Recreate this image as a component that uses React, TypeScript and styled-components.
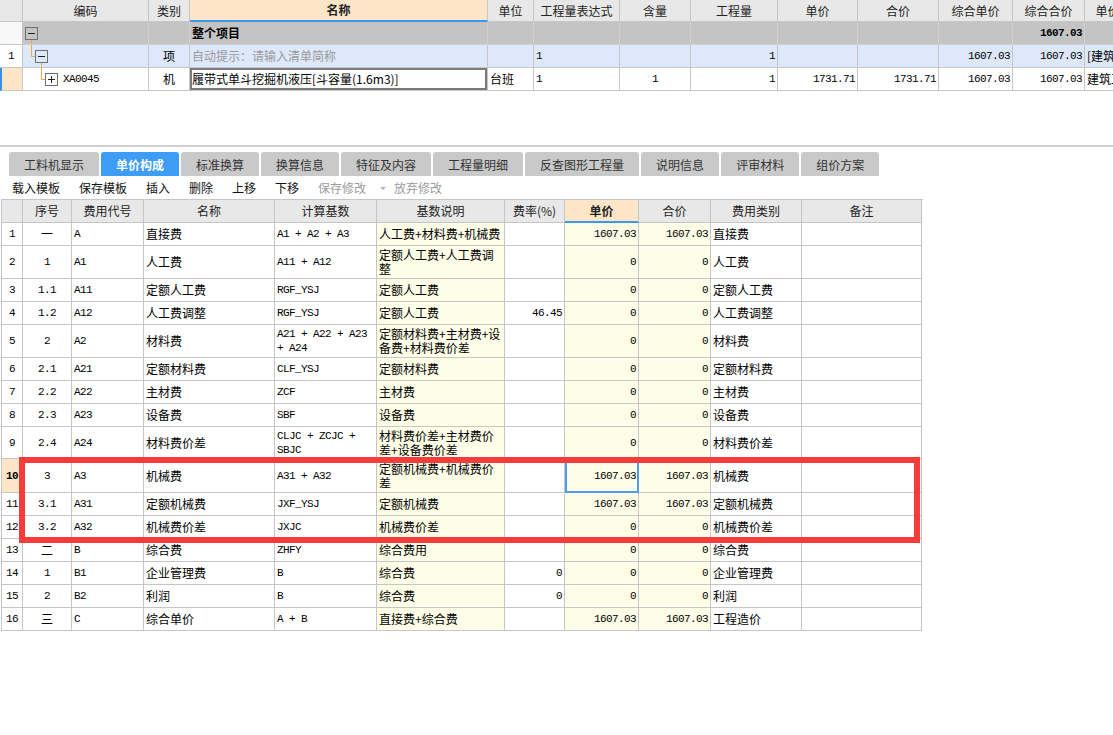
import React from 'react';
import styled, { createGlobalStyle } from 'styled-components';

const MONO = `"Liberation Mono", "DejaVu Sans Mono", monospace`;

const GlobalStyle = createGlobalStyle`
  html, body { margin: 0; padding: 0; background: #fff; overflow: hidden; }
  body {
    font-family: "Noto Sans CJK SC", "Noto Sans", sans-serif;
    font-size: 12px;
    color: #000;
    width: 1113px;
    height: 735px;
  }
  * { box-sizing: border-box; }
`;

type Align = 'left' | 'center' | 'right';

interface CellProps {
  $align?: Align;
  $bg?: string;
  $bold?: boolean;
  $mono?: boolean;
  $muted?: boolean;
  $selected?: boolean;
  $accent?: boolean;
  $edit?: boolean;
  $indent?: number;
  $lineColor?: string;
}

const Cell = styled.div<CellProps>`
  position: relative;
  display: flex;
  align-items: center;
  justify-content: ${(p) => (p.$align === 'right' ? 'flex-end' : p.$align === 'center' ? 'center' : 'flex-start')};
  text-align: ${(p) => p.$align ?? 'left'};
  padding: 0 2px 0 ${(p) => (p.$indent ?? 2)}px;
  border-right: 1px solid ${(p) => p.$lineColor ?? '#c6c6c6'};
  border-bottom: ${(p) => (p.$accent ? '2px solid #3d97f0' : `1px solid ${p.$lineColor ?? '#c6c6c6'}`)};
  background: ${(p) => p.$bg ?? 'transparent'};
  font-weight: ${(p) => (p.$bold ? 700 : 400)};
  color: ${(p) => (p.$muted ? '#9a9a9a' : '#000')};
  font-family: ${(p) => (p.$mono ? MONO : 'inherit')};
  font-size: ${(p) => (p.$mono ? '11px' : '12px')};
  letter-spacing: ${(p) => (p.$mono ? '-0.6px' : '0')};
  white-space: pre;
  line-height: 14px;
  overflow: hidden;
  min-width: 0;
  outline: ${(p) => (p.$selected ? '2px solid #4a9df0' : 'none')};
  outline-offset: -2px;
  box-shadow: ${(p) => (p.$edit ? 'inset 0 0 0 2px #7a7a7a' : 'none')};
`;

const HeadCell = styled(Cell)`
  color: #222;
`;

/* ---------- top table ---------- */

const TopWrap = styled.div`
  width: 1113px;
  overflow: hidden;
`;

const TopRow = styled.div<{ $h: number; $bg?: string }>`
  display: grid;
  grid-template-columns: 23px 126px 41px 298px 46px 86px 71px 87px 80px 81px 74px 72px 46px;
  width: 1131px;
  height: ${(p) => p.$h}px;
  background: ${(p) => p.$bg ?? '#fff'};
`;

const Indicator = styled(Cell)<{ $bar?: boolean }>`
  border-left: ${(p) => (p.$bar ? '2px solid #3a8ee6' : '0')};
`;

const ExpandBox = styled.span`
  position: relative;
  z-index: 1;
  flex: none;
  width: 13px;
  height: 13px;
  border: 1px solid #6f6f6f;
  display: inline-flex;
  align-items: center;
  justify-content: center;
`;

const CodeText = styled.span`
  margin-left: 5px;
  font-family: ${MONO};
  font-size: 11px;
  letter-spacing: -0.6px;
`;

const TreeSvg = styled.svg`
  position: absolute;
  left: 0;
  top: 0;
  width: 40px;
  height: 24px;
  overflow: visible;
  pointer-events: none;
`;

type Seg = [number, number, number, number];

const TreeLines: React.FC<{ segs: Seg[] }> = ({ segs }) => (
  <TreeSvg viewBox="0 0 40 24">
    {segs.map(([x1, y1, x2, y2], i) => (
      <line key={i} x1={x1} y1={y1} x2={x2} y2={y2} stroke="#f0a848" strokeWidth={1} />
    ))}
  </TreeSvg>
);

const Toggle: React.FC<{ plus?: boolean }> = ({ plus }) => (
  <ExpandBox>
    <svg width="11" height="11" viewBox="0 0 11 11">
      <line x1="2" y1="5.5" x2="9" y2="5.5" stroke="#222" strokeWidth={1} />
      {plus && <line x1="5.5" y1="2" x2="5.5" y2="9" stroke="#222" strokeWidth={1} />}
    </svg>
  </ExpandBox>
);

const topHeaders = ['', '编码', '类别', '名称', '单位', '工程量表达式', '含量', '工程量', '单价', '合价', '综合单价', '综合合价', '单价'];

/* ---------- tabs and toolbar ---------- */

const TabArea = styled.div`
  margin-top: 54px;
  border-top: 2px solid #d0d0d0;
  padding-top: 5px;
`;

const TabBar = styled.div`
  display: flex;
  gap: 2px;
  padding-left: 9px;
`;

const Tab = styled.div<{ $active?: boolean }>`
  height: 24px;
  padding: 0 15px;
  display: flex;
  align-items: center;
  background: ${(p) => (p.$active ? '#3d9cf4' : '#c9c9c9')};
  color: ${(p) => (p.$active ? '#fff' : '#333')};
  font-weight: ${(p) => (p.$active ? 700 : 400)};
  border-radius: 3px 3px 0 0;
`;

const Toolbar = styled.div`
  height: 23px;
  display: flex;
  align-items: center;
  gap: 19px;
  padding-left: 12px;
`;

const ToolItem = styled.span<{ $disabled?: boolean }>`
  color: ${(p) => (p.$disabled ? '#9c9c9c' : '#111')};
`;

const DropArrow = styled.span`
  width: 0;
  height: 0;
  margin: 1px -11px 0 -5px;
  border-left: 3px solid transparent;
  border-right: 3px solid transparent;
  border-top: 3px solid #b4b4b4;
`;

const tabs = ['工料机显示', '单价构成', '标准换算', '换算信息', '特征及内容', '工程量明细', '反查图形工程量', '说明信息', '评审材料', '组价方案'];
const tools: [string, boolean][] = [
  ['载入模板', false],
  ['保存模板', false],
  ['插入', false],
  ['删除', false],
  ['上移', false],
  ['下移', false],
  ['保存修改', true],
];

/* ---------- bottom table ---------- */

const BottomTable = styled.div`
  position: relative;
  margin-left: 1px;
  width: 922px;
  border-left: 1px solid #c6c6c6;
  border-top: 1px solid #c6c6c6;
`;

const BRow = styled.div<{ $h: number }>`
  display: grid;
  grid-template-columns: 21px 49px 72px 131px 102px 128px 60px 74px 72px 91px 120px;
  height: ${(p) => p.$h}px;
`;

const Highlight = styled.div`
  position: absolute;
  left: 17px;
  top: 257px;
  width: 901px;
  height: 86px;
  border: 6px solid #f63b3b;
  pointer-events: none;
`;

const YELLOW = '#fefee8';
const PEACH = '#fde6c8';
const HEAD = '#e8e8e8';

const bottomHeaders = ['', '序号', '费用代号', '名称', '计算基数', '基数说明', '费率(%)', '单价', '合价', '费用类别', '备注'];

interface FeeRow {
  seq: string;
  code: string;
  name: string;
  base: string;
  desc: string;
  rate: string;
  price: string;
  total: string;
  type: string;
  h: number;
}

const feeRows: FeeRow[] = [
  { seq: '一', code: 'A', name: '直接费', base: 'A1 + A2 + A3', desc: '人工费+材料费+机械费', rate: '', price: '1607.03', total: '1607.03', type: '直接费', h: 23 },
  { seq: '1', code: 'A1', name: '人工费', base: 'A11 + A12', desc: '定额人工费+人工费调\n整', rate: '', price: '0', total: '0', type: '人工费', h: 33 },
  { seq: '1.1', code: 'A11', name: '定额人工费', base: 'RGF_YSJ', desc: '定额人工费', rate: '', price: '0', total: '0', type: '定额人工费', h: 23 },
  { seq: '1.2', code: 'A12', name: '人工费调整', base: 'RGF_YSJ', desc: '定额人工费', rate: '46.45', price: '0', total: '0', type: '人工费调整', h: 23 },
  { seq: '2', code: 'A2', name: '材料费', base: 'A21 + A22 + A23\n+ A24', desc: '定额材料费+主材费+设\n备费+材料费价差', rate: '', price: '0', total: '0', type: '材料费', h: 33 },
  { seq: '2.1', code: 'A21', name: '定额材料费', base: 'CLF_YSJ', desc: '定额材料费', rate: '', price: '0', total: '0', type: '定额材料费', h: 23 },
  { seq: '2.2', code: 'A22', name: '主材费', base: 'ZCF', desc: '主材费', rate: '', price: '0', total: '0', type: '主材费', h: 23 },
  { seq: '2.3', code: 'A23', name: '设备费', base: 'SBF', desc: '设备费', rate: '', price: '0', total: '0', type: '设备费', h: 23 },
  { seq: '2.4', code: 'A24', name: '材料费价差', base: 'CLJC + ZCJC +\nSBJC', desc: '材料费价差+主材费价\n差+设备费价差', rate: '', price: '0', total: '0', type: '材料费价差', h: 32 },
  { seq: '3', code: 'A3', name: '机械费', base: 'A31 + A32', desc: '定额机械费+机械费价\n差', rate: '', price: '1607.03', total: '1607.03', type: '机械费', h: 34 },
  { seq: '3.1', code: 'A31', name: '定额机械费', base: 'JXF_YSJ', desc: '定额机械费', rate: '', price: '1607.03', total: '1607.03', type: '定额机械费', h: 23 },
  { seq: '3.2', code: 'A32', name: '机械费价差', base: 'JXJC', desc: '机械费价差', rate: '', price: '0', total: '0', type: '机械费价差', h: 23 },
  { seq: '二', code: 'B', name: '综合费', base: 'ZHFY', desc: '综合费用', rate: '', price: '0', total: '0', type: '综合费', h: 23 },
  { seq: '1', code: 'B1', name: '企业管理费', base: 'B', desc: '综合费', rate: '0', price: '0', total: '0', type: '企业管理费', h: 23 },
  { seq: '2', code: 'B2', name: '利润', base: 'B', desc: '综合费', rate: '0', price: '0', total: '0', type: '利润', h: 23 },
  { seq: '三', code: 'C', name: '综合单价', base: 'A + B', desc: '直接费+综合费', rate: '', price: '1607.03', total: '1607.03', type: '工程造价', h: 23 },
];

const isAscii = (s: string) => /^[\x20-\x7e]*$/.test(s);

const Page = styled.div`
  width: 1113px;
  height: 735px;
  overflow: hidden;
  background: #fff;
`;

export default function App() {
  const grayLine = '#d0d0d0';
  return (
    <Page>
      <GlobalStyle />
      <TopWrap>
        <TopRow $h={22} $bg={HEAD}>
          {topHeaders.map((h, i) =>
            i === 3 ? (
              <HeadCell key={i} $align="center" $bg={PEACH} $bold $accent>
                {h}
              </HeadCell>
            ) : (
              <HeadCell key={i} $align="center">
                {h}
              </HeadCell>
            )
          )}
        </TopRow>

        <TopRow $h={23} $bg="#c4c4c4">
          <Indicator $bg="#f8f8f8" $lineColor="#c6c6c6" />
          <Cell $indent={2} $lineColor={grayLine}>
            <TreeLines segs={[[8.5, 17.5, 8.5, 24]]} />
            <Toggle />
          </Cell>
          <Cell $lineColor={grayLine} />
          <Cell $bold $lineColor={grayLine}>整个项目</Cell>
          <Cell $lineColor={grayLine} />
          <Cell $lineColor={grayLine} />
          <Cell $lineColor={grayLine} />
          <Cell $lineColor={grayLine} />
          <Cell $lineColor={grayLine} />
          <Cell $lineColor={grayLine} />
          <Cell $lineColor={grayLine} />
          <Cell $align="right" $mono $bold $lineColor={grayLine}>1607.03</Cell>
          <Cell $lineColor={grayLine} />
        </TopRow>

        <TopRow $h={23} $bg="#dde8fa">
          <Indicator $align="center" $mono $bg="#fff">1</Indicator>
          <Cell $indent={12}>
            <TreeLines
              segs={[
                [8.5, -1, 8.5, 11.5],
                [8.5, 11.5, 12, 11.5],
                [18.5, 17.5, 18.5, 24],
              ]}
            />
            <Toggle />
          </Cell>
          <Cell $align="center">项</Cell>
          <Cell $muted>自动提示：请输入清单简称</Cell>
          <Cell />
          <Cell $mono>1</Cell>
          <Cell />
          <Cell $align="right" $mono>1</Cell>
          <Cell />
          <Cell />
          <Cell $align="right" $mono>1607.03</Cell>
          <Cell $align="right" $mono>1607.03</Cell>
          <Cell>[建筑工程]</Cell>
        </TopRow>

        <TopRow $h={23}>
          <Indicator $bg={PEACH} $bar />
          <Cell $indent={22}>
            <TreeLines
              segs={[
                [18.5, -1, 18.5, 11.5],
                [18.5, 11.5, 22, 11.5],
              ]}
            />
            <Toggle plus />
            <CodeText>XA0045</CodeText>
          </Cell>
          <Cell $align="center">机</Cell>
          <Cell $edit>履带式单斗挖掘机液压[斗容量(1.6m3)]</Cell>
          <Cell>台班</Cell>
          <Cell $mono>1</Cell>
          <Cell $align="center" $mono>1</Cell>
          <Cell $align="right" $mono>1</Cell>
          <Cell $align="right" $mono>1731.71</Cell>
          <Cell $align="right" $mono>1731.71</Cell>
          <Cell $align="right" $mono>1607.03</Cell>
          <Cell $align="right" $mono>1607.03</Cell>
          <Cell>建筑工程</Cell>
        </TopRow>
      </TopWrap>

      <TabArea>
        <TabBar>
          {tabs.map((t, i) => (
            <Tab key={t} $active={i === 1}>
              {t}
            </Tab>
          ))}
        </TabBar>
        <Toolbar>
          {tools.map(([t, d]) => (
            <ToolItem key={t} $disabled={d}>
              {t}
            </ToolItem>
          ))}
          <DropArrow />
          <ToolItem $disabled>放弃修改</ToolItem>
        </Toolbar>
      </TabArea>

      <BottomTable>
        <BRow $h={23}>
          {bottomHeaders.map((h, i) =>
            i === 7 ? (
              <HeadCell key={i} $align="center" $bg={PEACH} $bold $accent>
                {h}
              </HeadCell>
            ) : (
              <HeadCell key={i} $align="center" $bg={HEAD}>
                {h}
              </HeadCell>
            )
          )}
        </BRow>
        {feeRows.map((r, i) => {
          const active = i === 9;
          return (
            <BRow key={i} $h={r.h}>
              <Cell $align="center" $mono $bold={active} $bg={active ? PEACH : undefined}>
                {String(i + 1)}
              </Cell>
              <Cell $align="center" $mono={isAscii(r.seq)}>
                {r.seq}
              </Cell>
              <Cell $mono>{r.code}</Cell>
              <Cell>{r.name}</Cell>
              <Cell $mono>{r.base}</Cell>
              <Cell $bg={YELLOW}>{r.desc}</Cell>
              <Cell $align="right" $mono>
                {r.rate}
              </Cell>
              <Cell $align="right" $mono $bg={YELLOW} $selected={active}>
                {r.price}
              </Cell>
              <Cell $align="right" $mono $bg={YELLOW}>
                {r.total}
              </Cell>
              <Cell>{r.type}</Cell>
              <Cell />
            </BRow>
          );
        })}
        <Highlight />
      </BottomTable>
    </Page>
  );
}
